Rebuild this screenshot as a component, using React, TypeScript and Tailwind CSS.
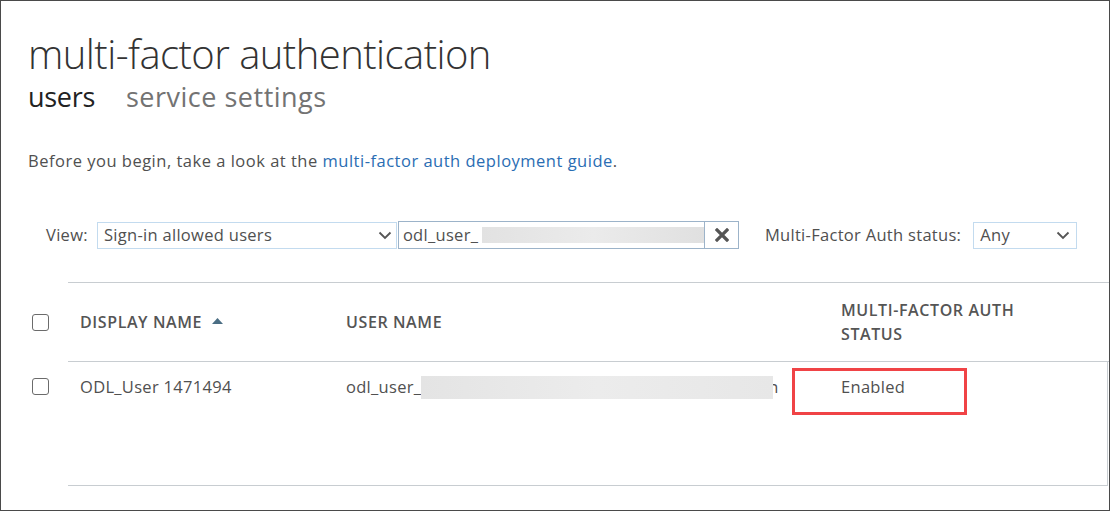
const font = "font-['Open_Sans','Noto_Sans',sans-serif]";

function Checkbox() {
  return <div className="h-[17px] w-[17px] rounded-[3px] border-[1.5px] border-[#6b6b6b] bg-white" />;
}

function Chevron() {
  return (
    <svg width="14" height="9" viewBox="0 0 14 9" className="shrink-0">
      <path d="M1.5 1.5 L7 7 L12.5 1.5" fill="none" stroke="#555" strokeWidth="1.8" />
    </svg>
  );
}

export default function App() {
  return (
    <div className={`${font} relative h-[511px] w-[1110px] overflow-hidden border border-[#4a4a4a] bg-white text-[#505050]`}>
      {/* page header */}
      <div className="pl-[27px] pt-[29px]">
        <h1 className="text-[40px] font-light leading-[48px] tracking-[-0.55px] text-[#333]">multi-factor authentication</h1>
        <div className="mt-[2px] flex gap-[31px] text-[27px] leading-[34px] tracking-[0.5px]">
          <span className="text-[#222] tracking-[-0.3px]">users</span>
          <span className="text-[#737373]">service settings</span>
        </div>
        <p className="mt-[36px] text-[16.5px] leading-[22px] tracking-[0.5px] text-[#505050]">
          Before you begin, take a look at the{' '}
          <a className="text-[#2a6db3]">multi-factor auth deployment guide</a>.
        </p>
      </div>

      {/* filters */}
      <div className="mt-[49px] flex items-center pl-[45px] text-[16.5px] tracking-[0.3px]">
        <span className="mr-[9px]">View:</span>
        <div className="flex h-[27px] w-[300px] items-center justify-between border border-[#c3dbef] pl-[6px] pr-[4px]">
          <span>Sign-in allowed users</span>
          <Chevron />
        </div>
        <div className="ml-[1px] flex h-[28px] w-[341px] items-stretch border border-[#9cb3c9]">
          <div className="flex flex-1 items-center pl-[4px]">
            <span>odl_user_</span>
            <div className="ml-[4px] h-[16px] w-[222px] bg-gradient-to-r from-[#e2e2e2] via-[#ebebeb] to-[#e0e0e0]" />
          </div>
          <div className="flex w-[34px] items-center justify-center border-l border-[#9cb3c9]">
            <svg width="14" height="14" viewBox="0 0 14 14">
              <path d="M2 2 L12 12 M12 2 L2 12" stroke="#555" strokeWidth="3.2" strokeLinecap="square" />
            </svg>
          </div>
        </div>
        <span className="ml-[26px] mr-[12px]">Multi-Factor Auth status:</span>
        <div className="flex h-[27px] w-[104px] items-center justify-between border border-[#c3dbef] pl-[6px] pr-[6px]">
          <span>Any</span>
          <Chevron />
        </div>
      </div>

      {/* table */}
      <div className="mt-[33px]">
        <div className="flex">
          <div className="flex w-[67px] items-center pl-[31px]">
            <Checkbox />
          </div>
          <div className="flex h-[80px] flex-1 items-center border-y border-[#c8cdd1] text-[16px] font-semibold tracking-[0.6px] text-[#555]">
            <div className="flex w-[278px] items-center pl-[12px]">
              DISPLAY NAME
              <svg width="11" height="6" viewBox="0 0 11 6" className="ml-[10px] mb-[2px]">
                <path d="M0 6 L5.5 0 L11 6 Z" fill="#4b6e84" />
              </svg>
            </div>
            <div className="w-[495px]">USER NAME</div>
            <div className="w-[220px] leading-[24px]">
              MULTI-FACTOR AUTH
              <br />
              STATUS
            </div>
          </div>
        </div>
        <div className="flex">
          <div className="w-[67px] pl-[31px] pt-[16px]">
            <Checkbox />
          </div>
          <div className="mr-[1px] flex h-[124px] flex-1 items-start border-r border-b border-[#c8cdd1] pt-[13px] text-[16.5px] tracking-[0.3px] text-[#505050]">
            <div className="w-[278px] pl-[12px]">ODL_User 1471494</div>
            <div className="flex w-[495px] items-center">
              <span>odl_user_</span>
              <div className="relative z-10 h-[23px] w-[352px] bg-gradient-to-r from-[#e4e4e4] via-[#ececec] to-[#e7e7e7]" />
              <span className="-ml-[5px]">n</span>
            </div>
            <div className="relative">
              <span>Enabled</span>
              <div className="absolute left-[-49px] top-[-7px] h-[47px] w-[175px] border-[3px] border-[#f04346]" />
            </div>
          </div>
        </div>
      </div>
    </div>
  );
}
